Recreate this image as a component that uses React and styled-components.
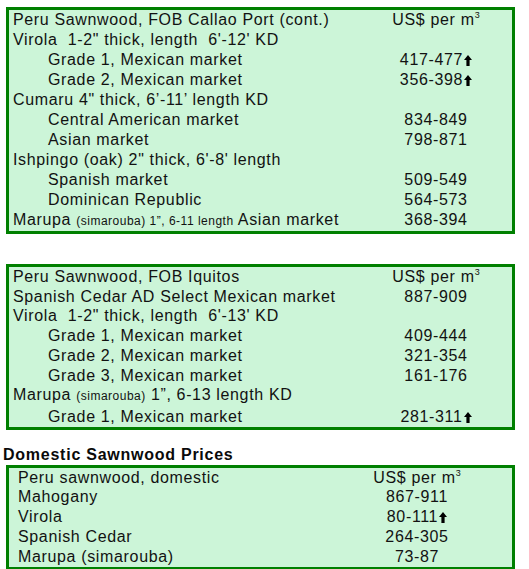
import React from "react";
import styled, { createGlobalStyle } from "styled-components";

const Global = createGlobalStyle`
  html, body { margin: 0; padding: 0; background: #ffffff; }
  body { font-family: "Liberation Sans", Arial, sans-serif; color: #121212; }
`;

const Page = styled.div`
  width: 529px;
  padding: 7px 14px 0 3px;
  box-sizing: border-box;
  display: flex;
  flex-direction: column;
`;

const Box = styled.div`
  margin: ${(p) => p.$mt || 0}px 0 0 3px;
  border: 3px solid #008000;
  background: #ccf5d8;
  padding-left: ${(p) => p.$pad}px;
  display: grid;
  grid-template-columns: 1fr ${(p) => p.$col}px;
  font-size: 16px;
  line-height: ${(p) => p.$lh || 20}px;
  letter-spacing: 0.65px;
`;

const Label = styled.div`
  padding-left: ${(p) => (p.$indent ? 35 : 0)}px;
  white-space: pre;
`;

const Value = styled.div`
  text-align: center;
  white-space: nowrap;
`;

const Small = styled.span`
  font-size: 12px;
  letter-spacing: 0.5px;
`;

const Sup = styled.sup`
  font-size: 9px;
  line-height: 0;
  vertical-align: 7px;
  letter-spacing: 0;
`;

const Heading = styled.div`
  margin-top: 15px;
  font-size: 16px;
  font-weight: bold;
  line-height: 20px;
  letter-spacing: 0.75px;
  color: #0a0a0a;
`;

const ArrowSvg = styled.svg`
  width: 8px;
  height: 11px;
  margin-left: 1px;
  vertical-align: -1px;
`;

const Up = () => (
  <ArrowSvg viewBox="0 0 8 11">
    <polygon points="4,0 8,5 5.6,5 5.6,11 2.4,11 2.4,5 0,5" fill="#000" />
  </ArrowSvg>
);

const Unit = () => (
  <>
    US$ per m<Sup>3</Sup>
  </>
);

const box1 = [
  { label: "Peru Sawnwood, FOB Callao Port (cont.)", value: <Unit /> },
  { label: "Virola  1-2\" thick, length  6'-12' KD" },
  { label: "Grade 1, Mexican market", indent: true, value: "417-477", up: true },
  { label: "Grade 2, Mexican market", indent: true, value: "356-398", up: true },
  { label: "Cumaru 4\" thick, 6\u2019-11\u2019 length KD" },
  { label: "Central American market", indent: true, value: "834-849" },
  { label: "Asian market", indent: true, value: "798-871" },
  { label: "Ishpingo (oak) 2\" thick, 6'-8' length" },
  { label: "Spanish market", indent: true, value: "509-549" },
  { label: "Dominican Republic", indent: true, value: "564-573" },
  {
    label: (
      <>
        Marupa <Small>(simarouba) 1&#8221;, 6-11 length</Small> Asian market
      </>
    ),
    value: "368-394",
  },
];

const box2 = [
  { label: "Peru Sawnwood, FOB Iquitos", value: <Unit /> },
  { label: "Spanish Cedar AD Select Mexican market", value: "887-909" },
  { label: "Virola  1-2\" thick, length  6'-13' KD" },
  { label: "Grade 1, Mexican market", indent: true, value: "409-444" },
  { label: "Grade 2, Mexican market", indent: true, value: "321-354" },
  { label: "Grade 3, Mexican market", indent: true, value: "161-176" },
  {
    label: (
      <>
        Marupa <Small>(simarouba)</Small> 1&#8221;, 6-13 length KD
      </>
    ),
  },
  { label: "Grade 1, Mexican market", indent: true, value: "281-311", up: true },
];

const box3 = [
  { label: "Peru sawnwood, domestic", value: <Unit /> },
  { label: "Mahogany", value: "867-911" },
  { label: "Virola", value: "80-111", up: true },
  { label: "Spanish Cedar", value: "264-305" },
  { label: "Marupa (simarouba)", value: "73-87" },
];

const PriceBox = ({ rows, pad, col, mt, lh }) => (
  <Box $pad={pad} $col={col} $mt={mt} $lh={lh}>
    {rows.map((r, i) => (
      <React.Fragment key={i}>
        <Label $indent={r.indent}>{r.label}</Label>
        <Value>
          {r.value}
          {r.up && <Up />}
        </Value>
      </React.Fragment>
    ))}
  </Box>
);

export default function App() {
  return (
    <>
      <Global />
      <Page>
        <PriceBox rows={box1} pad={4} col={152} />
        <PriceBox rows={box2} pad={4} col={152} mt={30} lh={19.7} />
        <Heading>Domestic Sawnwood Prices</Heading>
        <PriceBox rows={box3} pad={9} col={190} lh={19.8} />
      </Page>
    </>
  );
}
